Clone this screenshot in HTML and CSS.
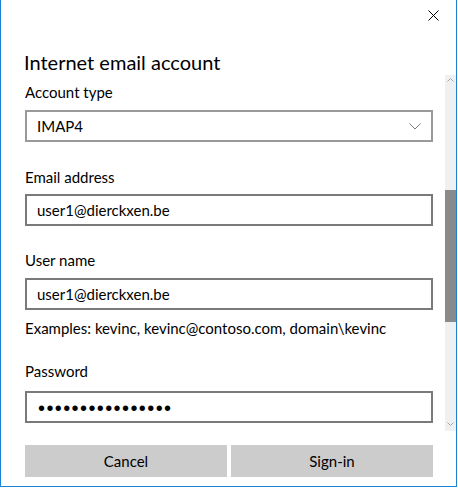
FILE: index.html
```html
<!DOCTYPE html>
<html>
<head>
  <title>Internet email account</title>
  <link rel="stylesheet" href="styles.css">
</head>
<body>
  <div class="dialog">
    <div class="titlebar">
      <button class="close-button" title="Close">
        <svg width="11" height="11" viewBox="0 0 11 11">
          <path d="M0.5 0.5 L10.5 10.5 M10.5 0.5 L0.5 10.5" stroke="#000" stroke-width="1" fill="none"/>
        </svg>
      </button>
    </div>

    <h1 class="dialog-title">Internet email account</h1>

    <div class="scroller">
      <form class="fields">
        <label class="field-label first">Account type</label>
        <div class="select-box">
          <span>IMAP4</span>
          <svg width="12" height="7" viewBox="0 0 12 7">
            <path d="M0.5 0.5 L6 6 L11.5 0.5" stroke="#7a7a7a" stroke-width="1" fill="none"/>
          </svg>
        </div>

        <label class="field-label email-label">Email address</label>
        <input class="text-box email-box" type="text" value="user1@dierckxen.be">

        <label class="field-label user-label">User name</label>
        <input class="text-box user-box" type="text" value="user1@dierckxen.be">
        <p class="hint">Examples: kevinc, kevinc@contoso.com, domain\kevinc</p>

        <label class="field-label password-label">Password</label>
        <input class="text-box password-box" type="password" value="abcdefghijklmnop">
      </form>

      <div class="scrollbar">
        <svg class="arrow" width="7" height="4" viewBox="0 0 7 4">
          <path d="M0.5 3.5 L3.5 0.5 L6.5 3.5" stroke="#a6a6a6" stroke-width="1" fill="none"/>
        </svg>
        <div class="thumb"></div>
        <svg class="arrow arrow-down" width="7" height="4" viewBox="0 0 7 4">
          <path d="M0.5 0.5 L3.5 3.5 L6.5 0.5" stroke="#a6a6a6" stroke-width="1" fill="none"/>
        </svg>
      </div>
    </div>

    <div class="actions">
      <button class="action-button">Cancel</button>
      <button class="action-button">Sign-in</button>
    </div>
  </div>
</body>
</html>
```

FILE: styles.css
```css
body {
  margin: 0;
  padding: 0;
  background: #fff;
  font-family: Lato, "Noto Sans", sans-serif;
  color: #000;
}

.dialog {
  width: 457px;
  height: 487px;
  box-sizing: border-box;
  border-left: 1px solid #1883d7;
  border-right: 1px solid #1883d7;
  border-bottom: 1px solid #1883d7;
  background: #fff;
}

.titlebar {
  height: 30px;
  display: flex;
  justify-content: flex-end;
}

.close-button {
  width: 46px;
  height: 30px;
  padding: 0;
  margin: 0;
  border: none;
  background: transparent;
  display: flex;
  align-items: center;
  justify-content: center;
  cursor: pointer;
}

.close-button:hover {
  background-color: #e81123;
}

.dialog-title {
  margin: 20px 0 1px 23px;
  font-size: 20px;
  line-height: 24px;
  font-weight: normal;
}

.scroller {
  height: 356px;
  display: flex;
}

.fields {
  flex: 1;
  margin: 0;
  padding-left: 24px;
  padding-right: 12px;
  display: flex;
  flex-direction: column;
}

.field-label {
  display: block;
  font-size: 15px;
  line-height: 20px;
}

.field-label.first {
  margin-top: 7px;
  margin-bottom: 8px;
}

.email-label {
  margin-top: 25px;
  margin-bottom: 7px;
}

.user-label {
  margin-top: 24px;
  margin-bottom: 8px;
}

.password-label {
  margin-top: 23px;
  margin-bottom: 10px;
}

.select-box {
  height: 32px;
  box-sizing: border-box;
  border: 2px solid #999;
  padding: 0 10px;
  display: flex;
  align-items: center;
  justify-content: space-between;
  font-size: 15px;
}

.text-box {
  display: block;
  width: 100%;
  height: 32px;
  box-sizing: border-box;
  margin: 0;
  border: 2px solid #7a7a7a;
  border-radius: 0;
  padding: 0 10px;
  font-family: Lato, "Noto Sans", sans-serif;
  font-size: 15px;
  color: #000;
  background: #fff;
  outline: none;
}

.password-box {
  font-family: "Liberation Sans", sans-serif;
  font-size: 20px;
  letter-spacing: 1.4px;
  padding-left: 11px;
  padding-top: 3px;
}

.hint {
  margin: 8px 0 0;
  font-size: 15px;
  line-height: 20px;
}

.scrollbar {
  width: 11px;
  background: #f0f0f0;
  display: flex;
  flex-direction: column;
  align-items: center;
}

.arrow {
  margin-top: 3px;
}

.arrow-down {
  margin-top: auto;
  margin-bottom: 5px;
}

.thumb {
  width: 11px;
  height: 132px;
  margin-top: 108px;
  background: #8a8a8a;
}

.actions {
  display: flex;
  gap: 4px;
  margin: 14px 23px 0 24px;
}

.action-button {
  flex: 1;
  height: 32px;
  border: none;
  background-color: #ccc;
  font-family: Lato, "Noto Sans", sans-serif;
  font-size: 15px;
  color: #000;
  cursor: pointer;
}

.action-button:hover {
  background-color: #bbb;
}
```
